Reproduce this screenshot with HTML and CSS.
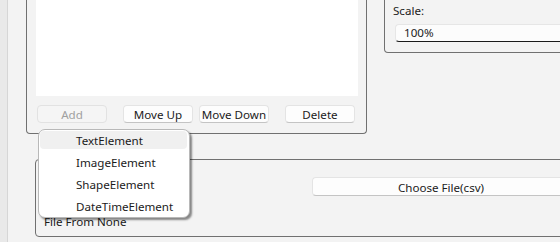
FILE: index.html
```html
<!DOCTYPE html>
<html>
<head>
<meta charset="utf-8">
<link rel="stylesheet" href="styles.css">
</head>
<body>
<div class="window">
  <div class="strip"></div>
  <div class="main">
    <div class="top-row">
      <div class="group elements">
        <div class="list"></div>
        <div class="btn-row">
          <div class="btn disabled add">Add</div>
          <div class="btn up">Move Up</div>
          <div class="btn down">Move Down</div>
          <div class="btn del">Delete</div>
        </div>
      </div>
      <div class="group scale">
        <div class="label">Scale:</div>
        <div class="input">100%</div>
      </div>
    </div>
    <div class="group data">
      <div class="file-row">
        <div class="btn choose">Choose File(csv)</div>
      </div>
      <div class="file-label">File From None</div>
    </div>
  </div>
  <div class="menu">
    <div class="item hover">TextElement</div>
    <div class="item">ImageElement</div>
    <div class="item">ShapeElement</div>
    <div class="item">DateTimeElement</div>
  </div>
</div>
</body>
</html>
```
FILE: styles.css
```css
html, body {
  margin: 0;
  padding: 0;
  background: #f3f3f3;
}
.window {
  position: relative;
  width: 560px;
  height: 242px;
  overflow: hidden;
  display: flex;
  font-family: "Noto Sans", "Open Sans", sans-serif;
  font-size: 11.6px;
  color: #1b1b1b;
}
.strip {
  width: 7px;
  flex: none;
  background: #e9e9e9;
  border-right: 1px solid #d6d6d6;
}
.main {
  flex: 1;
  display: flex;
  flex-direction: column;
  min-width: 0;
}
.top-row {
  display: flex;
  align-items: flex-start;
}
.group {
  border: 1px solid #707070;
  border-radius: 4px;
  box-sizing: border-box;
}
.elements {
  margin-left: 18px;
  width: 341px;
  height: 134px;
  border-top: none;
  border-top-left-radius: 0;
  border-top-right-radius: 0;
  padding: 0 8px 0 9px;
  flex: none;
}
.list {
  height: 96px;
  background: #ffffff;
}
.btn-row {
  display: flex;
  margin-top: 9px;
  padding-left: 1px;
}
.btn {
  box-sizing: border-box;
  height: 18px;
  width: 70px;
  background: #fdfdfd;
  border: 1px solid #e4e4e4;
  border-bottom-color: #c4c4c4;
  border-radius: 4px;
  display: flex;
  align-items: center;
  justify-content: center;
  line-height: 16px;
  padding-top: 2px;
  white-space: nowrap;
}
.btn.disabled {
  background: #f5f5f5;
  border-color: #e2e2e2;
  color: #a0a0a0;
}
.up { margin-left: 16px; }
.down { margin-left: 6px; }
.del { margin-left: 16px; }
.scale {
  flex: 1;
  margin-left: 17px;
  margin-right: -20px;
  height: 53px;
  border-top: none;
  border-top-left-radius: 0;
  border-top-right-radius: 0;
  padding: 3px 0 0 10px;
}
.label {
  margin-left: -2px;
  line-height: 16px;
}
.input {
  margin-top: 5px;
  height: 18px;
  box-sizing: border-box;
  background: #fcfcfc;
  border: 1px solid #e6e6e6;
  border-right: none;
  border-bottom: 1.5px solid #1a1a1a;
  border-radius: 4px 0 0 4px;
  padding-left: 8px;
  line-height: 16px;
}
.data {
  margin-top: 25px;
  margin-left: 27px;
  margin-right: -20px;
  height: 78px;
  padding: 17px 0 0 8px;
}
.file-row {
  display: flex;
}
.choose {
  margin-left: 268px;
  flex: 1;
  width: auto;
  height: 19px;
  border-right: none;
  padding-right: 10px;
}
.file-label {
  margin-top: 18px;
  line-height: 16px;
}
.menu {
  position: absolute;
  left: 38px;
  top: 129px;
  width: 152px;
  height: 89px;
  box-sizing: border-box;
  background: #ffffff;
  border: 1px solid #b8b8b8;
  border-radius: 7px;
  box-shadow: 2px 2px 2px rgba(0, 0, 0, 0.45);
  padding: 1px 2px 2px 1px;
  display: flex;
  flex-direction: column;
  gap: 4px;
}
.item {
  height: 18px;
  line-height: 19px;
  padding-left: 36px;
  border-radius: 4px;
}
.item.hover {
  background: #f0f0f0;
}
```
